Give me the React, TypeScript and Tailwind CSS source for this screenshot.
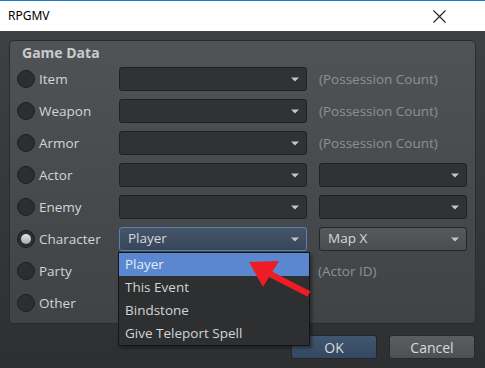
import React from 'react';

const rows = [
  { label: 'Item', note: '(Possession Count)' },
  { label: 'Weapon', note: '(Possession Count)' },
  { label: 'Armor', note: '(Possession Count)' },
  { label: 'Actor', second: '' },
  { label: 'Enemy', second: '' },
  { label: 'Character', value: 'Player', second: 'Map X', active: true },
  { label: 'Party', note: '(Actor ID)', noCombo: true },
  { label: 'Other', none: true },
];

const options = ['Player', 'This Event', 'Bindstone', 'Give Teleport Spell'];

function Caret() {
  return (
    <svg width="8" height="5" viewBox="0 0 8 5" className="shrink-0">
      <path d="M0 0.5h8L4 4.5z" fill="#c4c6c8" />
    </svg>
  );
}

function Combo({ value, width, variant }: { value?: string; width: string; variant?: 'active' | 'light' }) {
  const look =
    variant === 'active'
      ? 'border-[#5b82ac] bg-gradient-to-b from-[#45556a] to-[#37465a]'
      : variant === 'light'
      ? 'border-[#232527] bg-gradient-to-b from-[#56595c] to-[#4b4e51]'
      : 'border-[#1f2022] bg-[#303234]';
  return (
    <div className={`${width} h-[24px] rounded-[3px] border ${look} flex items-center justify-between pl-[8px] pr-[7px]`}>
      <span className="text-[13.5px] text-[#d6d8da] leading-none">{value}</span>
      <Caret />
    </div>
  );
}

export default function App() {
  return (
    <div
      className="relative w-[485px] h-[368px] overflow-hidden flex flex-col select-none"
      style={{ fontFamily: '"Open Sans", "Noto Sans", sans-serif' }}
    >
      {/* Title bar */}
      <div className="h-[31px] shrink-0 bg-white border-t border-[#1b7ad0] flex items-center justify-between pl-[8px] pr-[39px]">
        <span className="text-[12px] text-black" style={{ fontFamily: '"Noto Sans", sans-serif' }}>RPGMV</span>
        <svg width="13" height="13" viewBox="0 0 13 13">
          <path d="M0.5 0.5l12 12M12.5 0.5l-12 12" stroke="#222" strokeWidth="1.1" />
        </svg>
      </div>

      {/* Body */}
      <div className="flex-1 bg-gradient-to-b from-[#3e4143] to-[#2d2f31] pt-[9px] pl-[9px] pr-[9px]">
        <div className="h-[284px] rounded-[5px] border border-[#2a2c2e] bg-gradient-to-b from-[#505356] to-[#404346] pl-[7px] pt-[1px]">
          <div className="h-[21px] flex items-center pl-[5px] text-[14px] font-bold text-[#c9cbcd]">Game Data</div>
          {rows.map((r) => (
            <div key={r.label} className="h-[32px] flex items-center">
              <div className="w-[102px] flex items-center gap-[4px]">
                <div className="w-[18px] h-[18px] rounded-full border border-[#1e1f21] bg-[#2c2e30] flex items-center justify-center">
                  {r.active && <div className="w-[10px] h-[10px] rounded-full bg-gradient-to-b from-[#e2e4e6] to-[#a9acaf]" />}
                </div>
                <span className="text-[13.5px] text-[#d2d4d6]">{r.label}</span>
              </div>
              {!r.none && !r.noCombo && (
                <div className="flex items-center gap-[12px]">
                  <Combo width="w-[188px]" value={r.value} variant={r.active ? 'active' : undefined} />
                  {r.note && <span className="text-[13.5px] text-[#8d9092]">{r.note}</span>}
                  {r.second !== undefined && (
                    <Combo width="w-[148px]" value={r.second} variant={r.active ? 'light' : undefined} />
                  )}
                </div>
              )}
              {r.noCombo && <span className="ml-[199px] text-[13.5px] text-[#8d9092]">{r.note}</span>}
            </div>
          ))}
        </div>

        <div className="flex justify-end gap-[12px] mt-[11px] pr-[1px]">
          <button className="w-[86px] h-[24px] rounded-[3px] border border-[#1f2734] bg-gradient-to-b from-[#41566f] to-[#344760] text-[14px] text-[#d8dadc]">
            OK
          </button>
          <button className="w-[86px] h-[24px] rounded-[3px] border border-[#27292b] bg-gradient-to-b from-[#5a5e61] to-[#4c5053] text-[14px] text-[#d8dadc]">
            Cancel
          </button>
        </div>
      </div>

      {/* Open dropdown list */}
      <div className="absolute left-[118px] top-[252px] w-[192px] border border-[#141516] bg-[#2d2f31] shadow-[2px_2px_3px_rgba(0,0,0,0.4)]">
        {options.map((o, i) => (
          <div
            key={o}
            className={`h-[23px] flex items-center pl-[6px] text-[13.5px] ${
              i === 0 ? 'bg-[#5a87cf] text-[#e4eaf4]' : 'text-[#d2d4d6]'
            }`}
          >
            {o}
          </div>
        ))}
      </div>

      {/* Red annotation arrow */}
      <svg className="absolute left-0 top-0 pointer-events-none" width="485" height="368">
        <polygon points="249,262 279,261 263,287" fill="#ee1c24" />
        <line x1="266" y1="272" x2="309" y2="294" stroke="#ee1c24" strokeWidth="6" />
      </svg>
    </div>
  );
}
